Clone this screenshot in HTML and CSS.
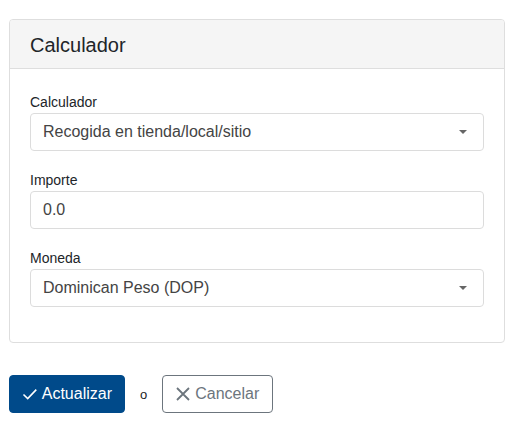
FILE: index.html
```html
<!DOCTYPE html>
<html>
<head>
<meta charset="utf-8">
<link rel="stylesheet" href="styles.css">
</head>
<body>
<div class="page">
  <div class="card">
    <div class="card-header"><h3 class="card-title">Calculador</h3></div>
    <div class="card-body">
      <div class="group">
        <label class="label">Calculador</label>
        <div class="control select"><span>Recogida en tienda/local/sitio</span><span class="caret"></span></div>
      </div>
      <div class="group">
        <label class="label">Importe</label>
        <div class="control"><span>0.0</span></div>
      </div>
      <div class="group">
        <label class="label">Moneda</label>
        <div class="control select"><span>Dominican Peso (DOP)</span><span class="caret"></span></div>
      </div>
    </div>
  </div>
  <div class="actions">
    <button class="btn btn-primary"><svg width="16" height="16" viewBox="0 0 16 16"><path d="M1.5 8.5 L5.8 12.6 L14.5 3.6" fill="none" stroke="#fff" stroke-width="1.6"/></svg>Actualizar</button>
    <span class="or">o</span>
    <button class="btn btn-outline"><svg width="16" height="16" viewBox="0 0 16 16"><path d="M2 2 L14 14 M14 2 L2 14" fill="none" stroke="#6c757d" stroke-width="1.8"/></svg>Cancelar</button>
  </div>
</div>
</body>
</html>
```
FILE: styles.css
```css
* { box-sizing: border-box; }
body { margin: 0; font-family: "Liberation Sans", Arial, sans-serif; color: #212529; background: #fff; }
.page { padding: 19px 10px 0 9px; }
.card { border: 1px solid #dedede; border-radius: 4px; overflow: hidden; }
.card-header { background: #f5f5f5; border-bottom: 1px solid #dedede; height: 49px; padding: 0 20px; display: flex; align-items: center; }
.card-title { margin: 0; font-size: 20px; font-weight: normal; color: #212529; padding-top: 2px; }
.card-body { padding: 23px 20px 16px; }
.group { margin-bottom: 19px; }
.label { display: block; font-size: 14px; line-height: 20px; margin-bottom: 1px; color: #212529; }
.control { height: 38px; border: 1px solid #dcdcdc; border-radius: 4px; padding: 0 12px; display: flex; align-items: center; justify-content: space-between; font-size: 16px; color: #444; }
.caret { width: 0; height: 0; border-left: 4px solid transparent; border-right: 4px solid transparent; border-top: 4px solid #666; margin-right: 4px; }
.actions { display: flex; align-items: center; margin-top: 32px; }
.btn { height: 38px; border-radius: 4px; font-family: "Liberation Sans", Arial, sans-serif; font-size: 16px; display: inline-flex; align-items: center; gap: 4px; padding: 0 12px; cursor: pointer; }
.btn-primary { background: #004a8a; border: 1px solid #004a8a; color: #fff; width: 116px; }
.btn-outline { background: #fff; border: 1px solid #6c757d; color: #6c757d; width: 111px; }
.or { font-size: 13px; color: #222; margin: 0 15px 0 15px; }
```
